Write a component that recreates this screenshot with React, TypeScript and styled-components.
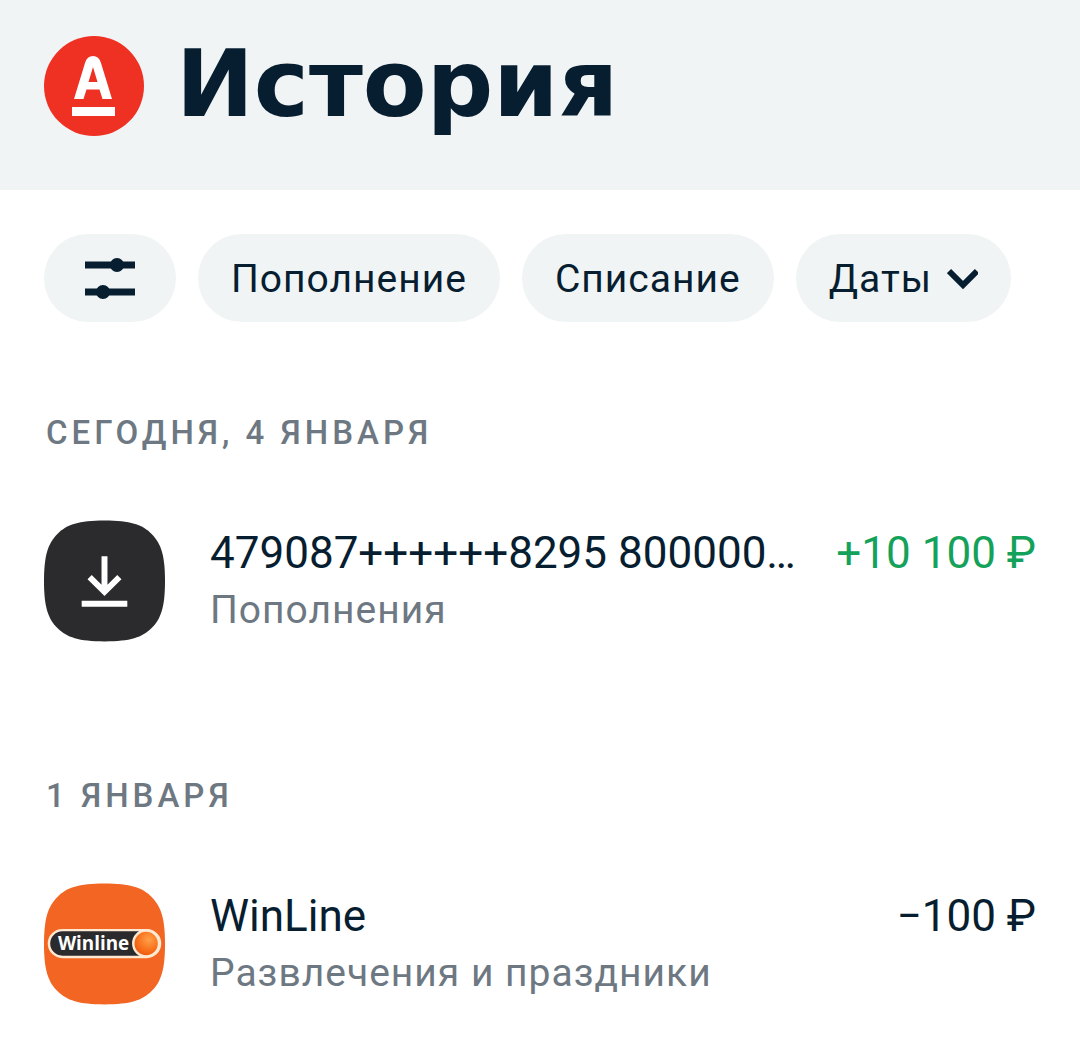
import React from 'react';
import styled, { createGlobalStyle } from 'styled-components';

const Global = createGlobalStyle`
  * { box-sizing: border-box; }
  body { margin: 0; background: #fff; color: #071d30; font-family: Roboto, "Liberation Sans", sans-serif; }
`;

const Header = styled.header`
  display: flex;
  align-items: flex-start;
  gap: 32px;
  padding: 36px 44px 54px;
  background: #f1f4f5;
`;
const Logo = styled.svg`
  flex: none;
  width: 100px;
  height: 100px;
`;
const Title = styled.h1`
  margin: 0;
  font: 700 93px/96px "DejaVu Sans", sans-serif;
`;
const Main = styled.main`
  padding: 44px 44px 40px;
`;
const Filters = styled.div`
  display: flex;
  gap: 22px;
`;
const Chip = styled.button`
  display: flex;
  align-items: center;
  justify-content: center;
  gap: 15px;
  height: 88px;
  padding: 2px 33px 0;
  border: 0;
  border-radius: 44px;
  background: #f1f4f5;
  color: inherit;
  font: 400 39px/48px Roboto, sans-serif;
  letter-spacing: 1px;
  white-space: nowrap;
`;
const Group = styled.section`
  padding-top: 89px;
`;
const DateLabel = styled.h2`
  margin: 0 0 65px;
  padding: 0 2px;
  color: #6d7882;
  font: 500 33px/44px Roboto, sans-serif;
  letter-spacing: 4px;
  text-transform: uppercase;
`;
const Row = styled.article`
  display: flex;
  gap: 45px;
  margin-bottom: 43px;
`;
const Icon = styled.svg`
  flex: none;
  width: 121px;
  height: 122px;
`;
const Details = styled.div`
  flex: 1;
  min-width: 0;
  padding-top: 7px;
`;
const Line = styled.div`
  display: flex;
  gap: 32px;
  font-size: 44px;
  line-height: 52px;
`;
const Name = styled.span`
  flex: 1;
  min-width: 0;
  white-space: nowrap;
`;
const Amount = styled.span<{ $income?: boolean }>`
  color: ${(p) => (p.$income ? '#14a25b' : 'inherit')};
  white-space: nowrap;
`;
const Category = styled.div`
  color: #6d7882;
  font-size: 39px;
  line-height: 62px;
  letter-spacing: 1px;
`;

const squircle =
  'M61 0C87 0 99 4 108.5 13.5S122 35 122 61 118 99 108.5 108.5 87 122 61 122 23 118 13.5 108.5 0 87 0 61 4 23 13.5 13.5 35 0 61 0Z';

export default function App() {
  return (
    <>
      <Global />
      <Header>
        <Logo viewBox="0 0 100 100" aria-hidden="true">
          <circle cx="50" cy="50" r="50" fill="#ef3124" />
          <path d="M28 71H71V80H28Z" fill="#fff" />
          <path fillRule="evenodd" d="M30 63L41 27Q43 20 49 20T57 27L68 63H58.5L55.5 53.500H42.500L39.500 63ZM44.500 46H53.500L49 31Z" fill="#fff" />
        </Logo>
        <Title>История</Title>
      </Header>
      <Main>
        <Filters>
          <Chip type="button" aria-label="Фильтры">
            <svg width="66" height="48" viewBox="0 0 66 48" fill="none" stroke="#071d30" strokeWidth="7">
              <path d="M8 10H58M8 37H58" />
              <circle cx="40" cy="10" r="3.5" />
              <circle cx="26" cy="37" r="3.5" />
            </svg>
          </Chip>
          <Chip type="button">Пополнение</Chip>
          <Chip type="button">Списание</Chip>
          <Chip type="button">
            Даты
            <svg width="31" height="24" viewBox="0 0 31 24" fill="none" stroke="#071d30" strokeWidth="6">
              <path d="M2 4L16 18L30 4" />
            </svg>
          </Chip>
        </Filters>
        <Group>
          <DateLabel>Сегодня, 4 января</DateLabel>
          <Row>
            <Icon viewBox="0 0 122 122" aria-hidden="true">
              <path d={squircle} fill="#2b2b2d" />
              <path d="M61 36V72M46 57L61 72L76 57M38 84H84" fill="none" stroke="#fff" strokeWidth="6" />
            </Icon>
            <Details>
              <Line><Name>479087++++++8295 800000…</Name><Amount $income>+10 100 ₽</Amount></Line>
              <Category>Пополнения</Category>
            </Details>
          </Row>
        </Group>
        <Group>
          <DateLabel>1 января</DateLabel>
          <Row>
            <Icon viewBox="0 0 122 122" role="img" aria-label="Winline">
              <defs>
                <radialGradient id="ball" cx="0.6" cy="0.35" r="0.7">
                  <stop offset="0" stopColor="#ffa04a" />
                  <stop offset="0.6" stopColor="#f9701c" />
                  <stop offset="1" stopColor="#e8530e" />
                </radialGradient>
              </defs>
              <path d={squircle} fill="#f26522" />
              <rect x="5" y="47" width="112" height="27" rx="13.5" fill="#2b2b2d" stroke="#ffe9d2" strokeWidth="2.5" />
              <text x="14" y="67" fill="#fff" fontFamily="Open Sans, sans-serif" fontWeight="700" fontSize="19">Winline</text>
              <circle cx="103" cy="60.5" r="13" fill="url(#ball)" stroke="#ffe9d2" strokeWidth="2.5" />
            </Icon>
            <Details>
              <Line><Name>WinLine</Name><Amount>−100 ₽</Amount></Line>
              <Category>Развлечения и праздники</Category>
            </Details>
          </Row>
        </Group>
      </Main>
    </>
  );
}
